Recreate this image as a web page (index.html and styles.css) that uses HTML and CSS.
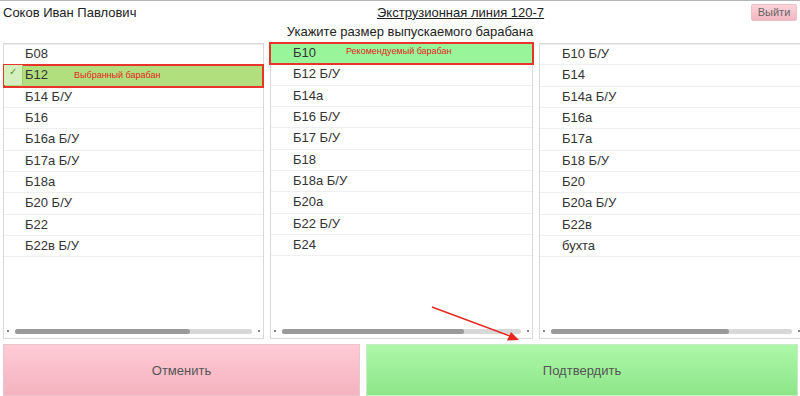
FILE: index.html
```html
<!DOCTYPE html>
<html lang="ru">
<head>
<meta charset="utf-8">
<title>Выбор барабана</title>
<link rel="stylesheet" href="styles.css">
</head>
<body>
<div class="page">
  <header class="top">
    <div class="user">Соков Иван Павлович</div>
    <div class="line">Экструзионная линия 120-7</div>
    <button class="exit">Выйти</button>
  </header>
  <div class="subtitle">Укажите размер выпускаемого барабана</div>
  <div class="lists">
    <div class="col">
      <div class="rows">
        <div class="row">Б08</div>
        <div class="row selected"><span class="check">✓</span>Б12<span class="note">Выбранный барабан</span></div>
        <div class="row">Б14 Б/У</div>
        <div class="row">Б16</div>
        <div class="row">Б16а Б/У</div>
        <div class="row">Б17а Б/У</div>
        <div class="row">Б18а</div>
        <div class="row">Б20 Б/У</div>
        <div class="row">Б22</div>
        <div class="row">Б22в Б/У</div>
      </div>
      <div class="scroll"><span class="dot"></span><div class="track"><div class="thumb t1"></div></div><span class="dot"></span></div>
    </div>
    <div class="col">
      <div class="rows">
        <div class="row recommended">Б10<span class="note">Рекомендуемый барабан</span></div>
        <div class="row">Б12 Б/У</div>
        <div class="row">Б14а</div>
        <div class="row">Б16 Б/У</div>
        <div class="row">Б17 Б/У</div>
        <div class="row">Б18</div>
        <div class="row">Б18а Б/У</div>
        <div class="row">Б20а</div>
        <div class="row">Б22 Б/У</div>
        <div class="row">Б24</div>
      </div>
      <div class="scroll"><span class="dot"></span><div class="track"><div class="thumb t2"></div></div><span class="dot"></span></div>
    </div>
    <div class="col">
      <div class="rows">
        <div class="row">Б10 Б/У</div>
        <div class="row">Б14</div>
        <div class="row">Б14а Б/У</div>
        <div class="row">Б16а</div>
        <div class="row">Б17а</div>
        <div class="row">Б18 Б/У</div>
        <div class="row">Б20</div>
        <div class="row">Б20а Б/У</div>
        <div class="row">Б22в</div>
        <div class="row">бухта</div>
      </div>
      <div class="scroll"><span class="dot"></span><div class="track"><div class="thumb t3"></div></div><span class="dot"></span></div>
    </div>
  </div>
  <div class="actions">
    <button class="btn cancel">Отменить</button>
    <button class="btn confirm">Подтвердить</button>
  </div>
  <svg class="arrow" width="800" height="396" viewBox="0 0 800 396">
    <line x1="432" y1="307" x2="510" y2="336" stroke="#e8261e" stroke-width="1.4"/>
    <polygon points="519,340 507,340.5 511,332" fill="#e8261e"/>
  </svg>
</div>
</body>
</html>
```
FILE: styles.css
```css
* { box-sizing: border-box; }
html, body { margin: 0; padding: 0; background: #fff; }
body { font-family: "Liberation Sans", Arial, sans-serif; color: #333; }
.page { position: relative; width: 800px; height: 396px; overflow: hidden; border-top: 1px solid #b5b5b5; }

.top { display: flex; align-items: center; height: 22px; padding-left: 3px; }
.user { width: 374px; font-size: 13px; color: #222; }
.line { font-size: 13px; color: #222; text-decoration: underline; }
.exit { margin-left: auto; margin-right: 3px; width: 46px; height: 17px; padding: 0; font: 11px "Liberation Sans", Arial, sans-serif; color: #666; background: linear-gradient(#fdd3da, #f2b7c0); border: 1px solid #e9c1c7; border-radius: 2px; }

.subtitle { height: 20px; padding-left: 20px; text-align: center; font-size: 13px; color: #222; line-height: 18px; }

.lists { display: flex; gap: 6px; padding-left: 3px; height: 296px; }
.col { flex: 0 0 261px; display: flex; flex-direction: column; border: 1px solid #d9d9d9; box-shadow: inset 0 1px 0 #eee; }
.col:nth-child(2) { flex-basis: 263px; }
.col:nth-child(3) { flex-basis: 264px; border-right: none; }
.rows { flex: 1; }
.row { position: relative; height: 21.33px; line-height: 20px; padding-left: 21px; font-size: 13px; border-bottom: 1px solid #efefef; color: #333; }
.col:nth-child(2) .row { padding-left: 22px; }
.col:nth-child(3) .row { padding-left: 22px; }
.note { position: absolute; left: 70px; top: 0; font-size: 9px; color: #e5231b; line-height: 20px; }
.col:nth-child(2) .note { left: 76px; top: -2px; }
.selected { background: #b2df7e; outline: 2px solid #e8352b; outline-offset: -1px; }
.check { position: absolute; left: 0; top: 0; width: 19px; height: 20px; background: #d6efbf; border-right: 1px solid #9fcf6a; color: #4a9a2b; font-size: 10px; line-height: 14px; text-align: center; }
.recommended { background: #98f59a; outline: 2px solid #e8352b; outline-offset: -1px; margin: -1px -1px 0; padding-left: 23px !important; }

.scroll { display: flex; align-items: center; height: 10px; margin-bottom: 2px; padding: 0 3px; gap: 6px; }
.dot { width: 2px; height: 2px; background: #888; flex: none; }
.track { flex: 1; height: 5px; background: #d8d8d8; border-radius: 3px; }
.thumb { height: 5px; background: #9a9a9a; border-radius: 3px; }
.t1 { width: 74%; }
.t2 { width: 76%; }
.t3 { width: 74%; }

.actions { display: flex; gap: 6px; padding: 5px 2px 1px 3px; height: 58px; }
.btn { height: 52px; border: 1px solid #ddd; font: 13px "Liberation Sans", Arial, sans-serif; color: #555; padding: 0; }
.cancel { flex: 0 0 357px; background: linear-gradient(#ffcbd4, #f4b3bf); border-color: #e9c6cc; }
.confirm { flex: 1; background: linear-gradient(#acf7a8, #8ee68a); border-color: #c9eec6; }

.arrow { position: absolute; left: 0; top: -1px; pointer-events: none; }
```
